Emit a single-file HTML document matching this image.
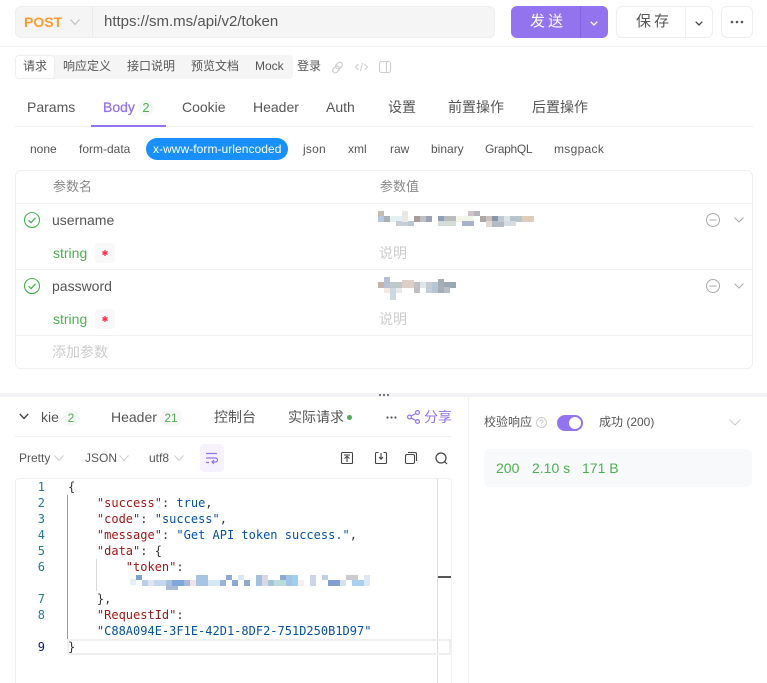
<!DOCTYPE html>
<html><head><meta charset="utf-8"><style>
html,body{margin:0;padding:0;background:#fff;overflow:hidden}
#p{position:relative;width:767px;height:683px;overflow:hidden;font-family:"Liberation Sans","Noto Sans CJK SC",sans-serif;color:#555}
.a,.t{position:absolute}
.t{white-space:pre;line-height:20px;transform:translateY(-10px)}
svg{position:absolute;overflow:visible}
.c{position:absolute;font:12px/16px "DejaVu Sans Mono",monospace;white-space:pre;left:68px;color:#333}
.k{color:#a31515}.s{color:#0451a5}
.n{position:absolute;font:12px/16px "DejaVu Sans Mono",monospace;width:20px;left:25px;text-align:right;color:#237893}
</style></head><body><div id="p">
<div class="a" style="left:15px;top:6px;width:478px;height:30px;background:#f5f5f5;border:1px solid #eee;border-radius:6px"></div>
<div class="a" style="left:92px;top:7px;width:1px;height:30px;background:#eaeaea"></div>
<div class="t" style="left:24px;top:22px;font-size:14px;font-weight:700;color:#ff9a2e">POST</div>
<svg style="left:70px;top:18px" width="10" height="8" fill="none" stroke="#bbb"><path d="M.5 1.500 5 6.500 9.500 1.500"/></svg>
<div class="t" style="left:104px;top:22px;font-size:15px;color:#555">https://sm.ms/api/v2/token</div>
<div class="a" style="left:511px;top:6px;width:97px;height:32px;background:#9373ee;border-radius:6px"></div>
<div class="a" style="left:580px;top:6px;width:1px;height:32px;background:#8463dc"></div>
<div class="t" style="left:530px;top:22px;font-size:15px;color:#fff;letter-spacing:3px">发送</div>
<svg style="left:590px;top:21px" width="8" height="5" fill="none" stroke="#fff" stroke-width="1.300"><path d="M.7.700 4 4 7.300.7"/></svg>
<div class="a" style="left:616px;top:6px;width:95px;height:30px;border:1px solid #eee;border-radius:6px"></div>
<div class="a" style="left:685px;top:7px;width:1px;height:30px;background:#eee"></div>
<div class="t" style="left:636px;top:22px;font-size:15px;color:#555;letter-spacing:3px">保存</div>
<svg style="left:695px;top:21px" width="8" height="5" fill="none" stroke="#444" stroke-width="1.300"><path d="M.7.700 4 4 7.300.7"/></svg>
<div class="a" style="left:721px;top:6px;width:30px;height:30px;border:1px solid #eee;border-radius:6px"></div>
<svg style="left:730px;top:20px" width="14" height="4" fill="#555"><circle cx="2" cy="2" r="1.300"/><circle cx="7" cy="2" r="1.300"/><circle cx="12" cy="2" r="1.300"/></svg>
<div class="a" style="left:0;top:46px;width:767px;height:1px;background:#f2f2f2"></div>

<div class="a" style="left:15px;top:55px;width:278px;height:24px;background:#f5f5f5;border-radius:4px"></div>
<div class="a" style="left:16px;top:56px;width:38px;height:22px;background:#fff;border-radius:3px;box-shadow:0 0 2px rgba(0,0,0,.08)"></div>
<div class="t" style="left:23px;top:66px;font-size:12px">请求</div>
<div class="t" style="left:63px;top:66px;font-size:12px">响应定义</div>
<div class="t" style="left:127px;top:66px;font-size:12px">接口说明</div>
<div class="t" style="left:191px;top:66px;font-size:12px">预览文档</div>
<div class="t" style="left:255px;top:66px;font-size:12px">Mock</div>
<div class="t" style="left:297px;top:66px;font-size:12px">登录</div>
<svg style="left:331px;top:61px" width="13" height="13" viewBox="0 0 13 13" fill="none" stroke="#ccc" stroke-width="1.200"><rect x="5.500" y=".8" width="5" height="7.500" rx="2.500" transform="rotate(45 8 4.500)"/><rect x="2.500" y="4.700" width="5" height="7.500" rx="2.500" transform="rotate(45 5 8.500)"/></svg>
<svg style="left:355px;top:62px" width="13" height="10" fill="none" stroke="#ccc" stroke-width="1"><path d="M3.500 2 .5 5 3.500 8M9.500 2 12.500 5 9.500 8M7.500 1 5.500 9"/></svg>
<svg style="left:379px;top:61px" width="12" height="12" fill="none" stroke="#ccc" stroke-width="1.100"><rect x=".5" y=".5" width="11" height="11" rx="2"/><path d="M7.500 .5v11"/></svg>

<div class="t" style="left:27px;top:107px;font-size:14px">Params</div>
<div class="t" style="left:103px;top:107px;font-size:14px;font-weight:400;color:#9373ee;-webkit-text-stroke:.3px #9373ee">Body</div>
<div class="a" style="left:138px;top:100px;width:16px;height:16px;border-radius:8px;background:#f6f8f7;color:#4caf50;font-size:13px;line-height:16px;text-align:center">2</div>
<div class="t" style="left:182px;top:107px;font-size:14px">Cookie</div>
<div class="t" style="left:253px;top:107px;font-size:14px">Header</div>
<div class="t" style="left:326px;top:107px;font-size:14px">Auth</div>
<div class="t" style="left:388px;top:107px;font-size:14px">设置</div>
<div class="t" style="left:448px;top:107px;font-size:14px">前置操作</div>
<div class="t" style="left:532px;top:107px;font-size:14px">后置操作</div>
<div class="a" style="left:15px;top:126px;width:738px;height:1px;background:#f0f0f0"></div>
<div class="a" style="left:91px;top:125px;width:75px;height:2px;background:#9373ee"></div>

<div class="t" style="left:30px;top:149px;font-size:12px">none</div>
<div class="t" style="left:79px;top:149px;font-size:12px">form-data</div>
<div class="a" style="left:146px;top:138px;width:142px;height:22px;border-radius:11px;background:#1890ff"></div>
<div class="t" style="left:153px;top:149px;font-size:12px;color:#fff;letter-spacing:.05px">x-www-form-urlencoded</div>
<div class="t" style="left:303px;top:149px;font-size:12px;letter-spacing:.2px">json</div>
<div class="t" style="left:348px;top:149px;font-size:12px">xml</div>
<div class="t" style="left:390px;top:149px;font-size:12px">raw</div>
<div class="t" style="left:431px;top:149px;font-size:12px">binary</div>
<div class="t" style="left:485px;top:149px;font-size:12px;letter-spacing:-.3px">GraphQL</div>
<div class="t" style="left:554px;top:149px;font-size:12px;letter-spacing:.3px">msgpack</div>

<div class="a" style="left:15px;top:170px;width:736px;height:197px;border:1px solid #f0f0f0;border-radius:6px"></div>
<div class="a" style="left:16px;top:203px;width:736px;height:1px;background:#f0f0f0"></div>
<div class="a" style="left:16px;top:269px;width:736px;height:1px;background:#f0f0f0"></div>
<div class="a" style="left:16px;top:335px;width:736px;height:1px;background:#f0f0f0"></div>
<div class="t" style="left:53px;top:187px;font-size:13px;color:#888">参数名</div>
<div class="t" style="left:380px;top:187px;font-size:13px;color:#888">参数值</div>

<svg style="left:24px;top:212px" width="16" height="16" fill="none" stroke="#4caf50" stroke-width="1.100"><circle cx="8" cy="8" r="7.500"/><path d="M4.500 8.200 7 10.700 11.500 5.800" stroke-width="1.300"/></svg>
<div class="t" style="left:52px;top:220px;font-size:14px">username</div>
<div class="t" style="left:53px;top:253px;font-size:14px;color:#4caf50">string</div>
<div class="a" style="left:95px;top:243px;width:20px;height:20px;border-radius:4px;background:#f8f8f8"></div>
<svg style="left:102px;top:250px" width="6" height="6" fill="none" stroke="#f5324a" stroke-width="1.300"><path d="M3 0v6M.4 1.500 5.600 4.500M5.600 1.500 .4 4.500"/></svg>
<div class="t" style="left:379px;top:253px;font-size:14px;color:#ccc">说明</div>
<svg style="left:706px;top:213px" width="14" height="14" fill="none" stroke="#aaa"><circle cx="7" cy="7" r="6.500"/><path d="M3.500 7h7"/></svg>
<svg style="left:734px;top:217px" width="10" height="6" fill="none" stroke="#aaa"><path d="M.5.500 5 5 9.500.5"/></svg>

<svg style="left:24px;top:278px" width="16" height="16" fill="none" stroke="#4caf50" stroke-width="1.100"><circle cx="8" cy="8" r="7.500"/><path d="M4.500 8.200 7 10.700 11.500 5.800" stroke-width="1.300"/></svg>
<div class="t" style="left:52px;top:286px;font-size:14px">password</div>
<div class="t" style="left:53px;top:319px;font-size:14px;color:#4caf50">string</div>
<div class="a" style="left:95px;top:309px;width:20px;height:20px;border-radius:4px;background:#f8f8f8"></div>
<svg style="left:102px;top:316px" width="6" height="6" fill="none" stroke="#f5324a" stroke-width="1.300"><path d="M3 0v6M.4 1.500 5.600 4.500M5.600 1.500 .4 4.500"/></svg>
<div class="t" style="left:379px;top:319px;font-size:14px;color:#ccc">说明</div>
<svg style="left:706px;top:279px" width="14" height="14" fill="none" stroke="#aaa"><circle cx="7" cy="7" r="6.500"/><path d="M3.500 7h7"/></svg>
<svg style="left:734px;top:283px" width="10" height="6" fill="none" stroke="#aaa"><path d="M.5.500 5 5 9.500.5"/></svg>
<div class="t" style="left:52px;top:352px;font-size:14px;color:#ccc">添加参数</div>

<svg style="left:378px;top:211px" width="156" height="17">
<g fill="#c9d1dc"><rect x="0" y="5" width="6" height="6" fill="#b5c8df"/><rect x="0" y="0" width="6" height="5" fill="#c8b9b5"/><rect x="6" y="5" width="6" height="6" fill="#aab0b8"/><rect x="12" y="5" width="12" height="6" fill="#e4f1f2"/><rect x="18" y="10" width="18" height="5" fill="#c9cdd5"/><rect x="24" y="0" width="6" height="11" fill="#e8e8e4"/><rect x="36" y="5" width="6" height="6" fill="#a89c9c"/><rect x="42" y="5" width="12" height="6" fill="#bfc0c2"/><rect x="48" y="5" width="6" height="6" fill="#9aa3b6"/><rect x="60" y="5" width="6" height="6" fill="#8d9fba"/><rect x="66" y="5" width="12" height="6" fill="#b8bcbc"/><rect x="78" y="5" width="18" height="6" fill="#f2f5e8"/><rect x="90" y="0" width="6" height="5" fill="#cdc2c8"/><rect x="84" y="10" width="12" height="5" fill="#a6b2c8"/><rect x="96" y="0" width="6" height="5" fill="#b6b2b8"/><rect x="102" y="5" width="6" height="6" fill="#aba7a3"/><rect x="108" y="5" width="6" height="6" fill="#c9c2bb"/><rect x="114" y="5" width="6" height="6" fill="#8996a8"/><rect x="114" y="10" width="12" height="6" fill="#b4bac6"/><rect x="120" y="5" width="6" height="6" fill="#c0c8d4"/><rect x="126" y="5" width="12" height="6" fill="#dfe4e6"/><rect x="132" y="5" width="12" height="6" fill="#b8c4cc"/><rect x="144" y="5" width="12" height="6" fill="#e0ccbb"/><rect x="126" y="10" width="12" height="5" fill="#d6dae4"/><rect x="108" y="10" width="6" height="6" fill="#e0d8d2"/><rect x="60" y="10" width="18" height="5" fill="#d5dcd6"/><rect x="30" y="10" width="6" height="5" fill="#b8c8da"/></g></svg>
<svg style="left:378px;top:277px" width="80" height="24">
<rect x="0" y="5" width="6" height="6" fill="#c6b4a8"/><rect x="6" y="0" width="6" height="11" fill="#b8c0d6"/><rect x="12" y="5" width="12" height="6" fill="#c0c8cc"/><rect x="24" y="3" width="12" height="8" fill="#dad0c6"/><rect x="36" y="5" width="6" height="11" fill="#c0c0c4"/><rect x="42" y="5" width="6" height="6" fill="#dfe6ea"/><rect x="48" y="5" width="6" height="11" fill="#c4ccd4"/><rect x="54" y="5" width="6" height="11" fill="#b4c6d4"/><rect x="60" y="2" width="6" height="14" fill="#a8acb4"/><rect x="66" y="5" width="12" height="6" fill="#98a8b4"/><rect x="66" y="10" width="6" height="6" fill="#b4bec8"/><rect x="12" y="11" width="6" height="12" fill="#ccd8e4"/><rect x="18" y="11" width="6" height="5" fill="#e8e8ea"/><rect x="6" y="11" width="6" height="5" fill="#f4e8e0"/></svg>

<div class="a" style="left:0;top:393px;width:767px;height:4px;background:#f2f2f7"></div>
<svg style="left:379px;top:394px" width="10" height="3" fill="#777"><rect width="2" height="2"/><rect x="4" width="2" height="2"/><rect x="8" width="2" height="2"/></svg>
<div class="a" style="left:468px;top:397px;width:1px;height:286px;background:#f0f0f0"></div>

<svg style="left:19px;top:413px" width="10" height="7" fill="none" stroke="#444" stroke-width="1.400"><path d="M.8 1 5 5.500 9.200 1"/></svg>
<div class="t" style="left:41px;top:417px;font-size:14px">kie</div>
<div class="a" style="left:63px;top:409px;width:16px;height:17px;border-radius:8px;background:#f6f8f7;color:#4caf50;font-size:12px;line-height:18px;text-align:center">2</div>
<div class="t" style="left:111px;top:417px;font-size:14px">Header</div>
<div class="a" style="left:160px;top:409px;width:22px;height:17px;border-radius:8px;background:#f6f8f7;color:#4caf50;font-size:12px;line-height:18px;text-align:center">21</div>
<div class="t" style="left:214px;top:417px;font-size:14px">控制台</div>
<div class="t" style="left:288px;top:417px;font-size:14px">实际请求</div>
<div class="a" style="left:347px;top:415px;width:5px;height:5px;border-radius:50%;background:#4caf50"></div>
<svg style="left:386px;top:416px" width="11" height="3" fill="#555"><circle cx="1.500" cy="1.500" r="1.100"/><circle cx="5.500" cy="1.500" r="1.100"/><circle cx="9.500" cy="1.500" r="1.100"/></svg>
<svg style="left:407px;top:410px" width="13" height="14" fill="none" stroke="#9373ee" stroke-width="1.200"><circle cx="10.500" cy="2.500" r="1.900"/><circle cx="2.500" cy="7" r="1.900"/><circle cx="10.500" cy="11.500" r="1.900"/><path d="M4.200 6 8.800 3.500M4.200 8 8.800 10.500"/></svg>
<div class="t" style="left:424px;top:417px;font-size:14px;color:#9373ee">分享</div>
<div class="a" style="left:15px;top:436px;width:437px;height:1px;background:#f0f0f0"></div>

<div class="t" style="left:19px;top:458px;font-size:12px">Pretty</div>
<svg style="left:54px;top:455px" width="10" height="6" fill="none" stroke="#ccc"><path d="M.5.500 5 5.500 9.500.5"/></svg>
<div class="t" style="left:85px;top:458px;font-size:12px">JSON</div>
<svg style="left:119px;top:455px" width="10" height="6" fill="none" stroke="#ccc"><path d="M.5.500 5 5.500 9.500.5"/></svg>
<div class="t" style="left:149px;top:458px;font-size:12px">utf8</div>
<svg style="left:174px;top:455px" width="10" height="6" fill="none" stroke="#ccc"><path d="M.5.500 5 5.500 9.500.5"/></svg>
<div class="a" style="left:200px;top:444px;width:24px;height:28px;border-radius:4px;background:#f5f1fe"></div>
<svg style="left:206px;top:452px" width="12" height="12" fill="none" stroke="#9373ee" stroke-width="1.200"><path d="M0 1.500h11M0 6h9.500a1.800 1.800 0 0 1 0 4H6M8 8 6 10 8 12M0 10.500h3"/></svg>
<svg style="left:341px;top:452px" width="12" height="12" fill="none" stroke="#444" stroke-width="1.100"><rect x=".5" y=".5" width="11" height="11" rx="1"/><path d="M3 3h6M3.500 6.500 6 4.200 8.500 6.500M6 5v5"/></svg>
<svg style="left:375px;top:452px" width="12" height="12" fill="none" stroke="#444" stroke-width="1.100"><path d="M3.500.5H1.500a1 1 0 0 0-1 1v9a1 1 0 0 0 1 1h9a1 1 0 0 0 1-1v-9a1 1 0 0 0-1-1H8.500M6 1v6M4 5 6 7.200 8 5"/></svg>
<svg style="left:405px;top:452px" width="12" height="12" fill="none" stroke="#444" stroke-width="1.100"><rect x=".5" y="2.500" width="9" height="9" rx="1.500"/><path d="M3 .5h7a1.500 1.500 0 0 1 1.500 1.500v7"/></svg>
<svg style="left:435px;top:452px" width="13" height="13" fill="none" stroke="#444" stroke-width="1.200"><circle cx="6" cy="6" r="5"/><path d="M9.500 9.500 12 12"/></svg>

<div class="a" style="left:15px;top:478px;width:437px;height:205px;border:1px solid #f0f0f0;border-bottom:0;border-radius:4px 4px 0 0;box-sizing:border-box"></div>
<div class="a" style="left:437px;top:479px;width:1px;height:204px;background:#ddd"></div>
<div class="a" style="left:438px;top:576px;width:13px;height:2px;background:#555"></div>
<div class="a" style="left:67px;top:639px;width:384px;height:16px;border:2px solid #efefef;box-sizing:border-box;border-right-width:2px"></div>
<div class="a" style="left:67px;top:495px;width:1px;height:144px;background:#999"></div>
<div class="a" style="left:96px;top:559px;width:1px;height:32px;background:#d9d9d9"></div>

<div class="n" style="top:479px">1</div><div class="c" style="top:479px">{</div>
<div class="n" style="top:495px">2</div><div class="c" style="top:495px">    <span class="k">"success"</span>: <span class="s">true</span>,</div>
<div class="n" style="top:511px">3</div><div class="c" style="top:511px">    <span class="k">"code"</span>: <span class="s">"success"</span>,</div>
<div class="n" style="top:527px">4</div><div class="c" style="top:527px">    <span class="k">"message"</span>: <span class="s">"Get API token success."</span>,</div>
<div class="n" style="top:543px">5</div><div class="c" style="top:543px">    <span class="k">"data"</span>: {</div>
<div class="n" style="top:559px">6</div><div class="c" style="top:559px">        <span class="k">"token"</span>:</div>
<svg style="left:130px;top:575px" width="244" height="15">
<rect x="0" y="4" width="6" height="6" fill="#e4eef8"/><rect x="6" y="0" width="6" height="5" fill="#7fa3cf"/><rect x="12" y="5" width="6" height="6" fill="#b9cfe6"/><rect x="18" y="5" width="6" height="6" fill="#dce6f2"/><rect x="24" y="5" width="12" height="6" fill="#c5d7ea"/><rect x="36" y="5" width="6" height="6" fill="#a6c2e2"/><rect x="36" y="10" width="12" height="5" fill="#a8bcd8"/><rect x="42" y="5" width="12" height="6" fill="#7da8dc"/><rect x="54" y="5" width="6" height="6" fill="#aab8d4"/><rect x="60" y="5" width="6" height="6" fill="#f0e4e8"/><rect x="66" y="0" width="12" height="11" fill="#a8c4e4"/><rect x="78" y="5" width="12" height="6" fill="#d4e8f4"/><rect x="90" y="5" width="6" height="6" fill="#9cb4d4"/><rect x="96" y="0" width="6" height="5" fill="#8caad4"/><rect x="102" y="5" width="6" height="6" fill="#8ea8d0"/><rect x="108" y="0" width="6" height="5" fill="#d8e8f2"/><rect x="114" y="5" width="6" height="6" fill="#8fa8cc"/><rect x="126" y="0" width="6" height="11" fill="#a4c0e0"/><rect x="132" y="0" width="6" height="11" fill="#d8d8e4"/><rect x="138" y="5" width="6" height="6" fill="#a8c4dc"/><rect x="144" y="5" width="12" height="6" fill="#bcdcdc"/><rect x="150" y="0" width="6" height="5" fill="#8ca8d4"/><rect x="156" y="0" width="6" height="11" fill="#a4c4e4"/><rect x="162" y="0" width="6" height="11" fill="#a0d0f0"/><rect x="168" y="5" width="6" height="6" fill="#f8f0e8"/><rect x="180" y="0" width="6" height="11" fill="#ccd4e8"/><rect x="192" y="0" width="6" height="5" fill="#c0d0e4"/><rect x="198" y="5" width="12" height="6" fill="#7fa0d0"/><rect x="210" y="5" width="6" height="6" fill="#d4e4e8"/><rect x="216" y="0" width="12" height="5" fill="#ccc"/><rect x="222" y="5" width="12" height="6" fill="#a8d0f0"/><rect x="234" y="0" width="6" height="11" fill="#dde8f4"/></svg>
<div class="n" style="top:591px">7</div><div class="c" style="top:591px">    },</div>
<div class="n" style="top:607px">8</div><div class="c" style="top:607px">    <span class="k">"RequestId"</span>:</div>
<div class="c" style="top:623px">    <span class="s">"C88A094E-3F1E-42D1-8DF2-751D250B1D97"</span></div>
<div class="n" style="top:639px;color:#0b216f">9</div><div class="c" style="top:639px">}</div>

<div class="t" style="left:484px;top:422px;font-size:12px">校验响应</div>
<svg style="left:536px;top:417px" width="11" height="11" fill="none" stroke="#ccc"><circle cx="5.500" cy="5.500" r="5"/><path d="M4 4.300a1.500 1.500 0 1 1 2 1.500c-.4.200-.5.500-.5 1M5.500 8v.8"/></svg>
<div class="a" style="left:557px;top:415px;width:26px;height:16px;border-radius:8px;background:#9373ee"></div>
<div class="a" style="left:569px;top:417px;width:12px;height:12px;border-radius:6px;background:#fff"></div>
<div class="t" style="left:599px;top:422px;font-size:12px">成功 (200)</div>
<svg style="left:729px;top:419px" width="12" height="7" fill="none" stroke="#ccc"><path d="M.5.500 6 6 11.500.5"/></svg>
<div class="a" style="left:484px;top:449px;width:268px;height:38px;border-radius:6px;background:#f7f9fb"></div>
<div class="t" style="left:496px;top:468px;font-size:14px;color:#4caf50">200</div>
<div class="t" style="left:532px;top:468px;font-size:14px;color:#4caf50">2.10 s</div>
<div class="t" style="left:582px;top:468px;font-size:14px;color:#4caf50">171 B</div>
</div></body></html>
